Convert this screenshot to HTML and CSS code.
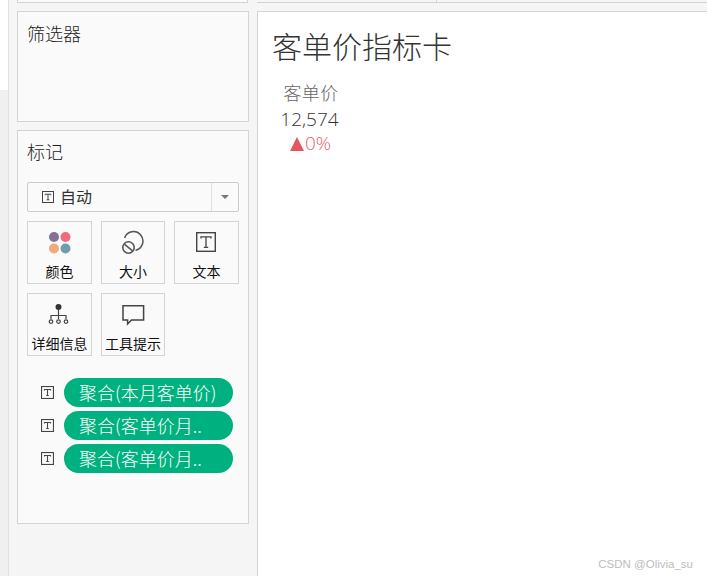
FILE: index.html
```html
<!DOCTYPE html>
<html lang="zh">
<head>
<meta charset="utf-8">
<title>客单价指标卡</title>
<link rel="stylesheet" href="styles.css">
</head>
<body>
<div class="app">
  <div class="edge"><div class="edge-top"></div></div>
  <aside class="sidebar">
    <div class="stub"></div>
    <section class="card filters"><h2 class="card-title">筛选器</h2></section>
    <section class="card marks">
      <h2 class="card-title marks-title">标记</h2>
      <div class="select">
        <div class="select-value">
          <svg class="t-icon" viewBox="0 0 12 12"><rect x=".5" y=".5" width="11" height="11" fill="none" stroke="#444"/><path d="M3.2 4.2V3.2H8.8V4.2M6 3.2V8.8M4.8 8.8H7.2" fill="none" stroke="#444"/></svg>
          <span class="select-text">自动</span>
        </div>
        <div class="select-arrow"><i class="caret"></i></div>
      </div>
      <div class="buttons">
        <div class="mark-btn">
          <svg class="btn-icon" viewBox="0 0 26 26"><circle cx="7" cy="7" r="5" fill="#85709a"/><circle cx="18.5" cy="7" r="5" fill="#f0697f"/><circle cx="7" cy="18.5" r="5" fill="#f0a97f"/><circle cx="18.5" cy="18.5" r="5" fill="#6f9dab"/></svg>
          <span>颜色</span>
        </div>
        <div class="mark-btn">
          <svg class="btn-icon" viewBox="0 0 26 26"><path d="M4.6 8A9.4 9.4 0 1 1 15.5 20.2" fill="none" stroke="#555" stroke-width="1.5"/><circle cx="8.5" cy="17.5" r="5.7" fill="none" stroke="#555" stroke-width="1.6"/><path d="M4.6 14.4L12.6 20.8" stroke="#555" stroke-width="1.6"/></svg>
          <span>大小</span>
        </div>
        <div class="mark-btn">
          <svg class="btn-icon" viewBox="0 0 26 26"><rect x="2.7" y="2.7" width="18.6" height="18.6" fill="none" stroke="#444" stroke-width="1.4"/><path d="M7 8.5V6.8H17V8.5M12 6.8V17.3M9.8 17.3H14.2" fill="none" stroke="#444" stroke-width="1.3"/></svg>
          <span>文本</span>
        </div>
        <div class="mark-btn">
          <svg class="btn-icon" viewBox="0 0 26 26"><circle cx="11.5" cy="5" r="3" fill="#333"/><path d="M11.5 8V17M4 17V13.5H19V17" fill="none" stroke="#444" stroke-width="1.2"/><circle cx="4" cy="19.6" r="1.8" fill="none" stroke="#444" stroke-width="1.2"/><circle cx="11.5" cy="19.6" r="1.8" fill="none" stroke="#444" stroke-width="1.2"/><circle cx="19" cy="19.6" r="1.8" fill="none" stroke="#444" stroke-width="1.2"/></svg>
          <span>详细信息</span>
        </div>
        <div class="mark-btn">
          <svg class="btn-icon" viewBox="0 0 26 26"><path d="M3 3.7H23.6V18H11.5L7.6 22V18H3Z" fill="none" stroke="#444" stroke-width="1.5"/></svg>
          <span>工具提示</span>
        </div>
      </div>
      <ul class="pills">
        <li class="pill-row">
          <svg class="t-icon" viewBox="0 0 12 12"><rect x=".5" y=".5" width="11" height="11" fill="none" stroke="#444"/><path d="M3.2 4.2V3.2H8.8V4.2M6 3.2V8.8M4.8 8.8H7.2" fill="none" stroke="#444"/></svg>
          <span class="pill">聚合(本月客单价)</span>
        </li>
        <li class="pill-row">
          <svg class="t-icon" viewBox="0 0 12 12"><rect x=".5" y=".5" width="11" height="11" fill="none" stroke="#444"/><path d="M3.2 4.2V3.2H8.8V4.2M6 3.2V8.8M4.8 8.8H7.2" fill="none" stroke="#444"/></svg>
          <span class="pill">聚合(客单价月..</span>
        </li>
        <li class="pill-row">
          <svg class="t-icon" viewBox="0 0 12 12"><rect x=".5" y=".5" width="11" height="11" fill="none" stroke="#444"/><path d="M3.2 4.2V3.2H8.8V4.2M6 3.2V8.8M4.8 8.8H7.2" fill="none" stroke="#444"/></svg>
          <span class="pill">聚合(客单价月..</span>
        </li>
      </ul>
    </section>
  </aside>
  <main class="main">
    <div class="tabs"><div class="tab"></div></div>
    <div class="sheet">
      <h1 class="sheet-title">客单价指标卡</h1>
      <div class="kpi">
        <div class="kpi-label">客单价</div>
        <div class="kpi-value">12,574</div>
        <div class="kpi-delta"><i class="tri"></i>0%</div>
      </div>
      <div class="watermark">CSDN @Olivia_su</div>
    </div>
  </main>
</div>
</body>
</html>
```
FILE: styles.css
```css
* { box-sizing: border-box; }
html, body { margin: 0; height: 100%; overflow: hidden; }
body { font-family: "Noto Sans CJK SC", "Liberation Sans", sans-serif; color: #333; background: #f5f5f5; }
h1, h2, ul { margin: 0; padding: 0; font-weight: 400; list-style: none; }

.app { display: flex; width: 707px; height: 576px; }

.edge { width: 9px; flex: none; background: #f0f0f0; border-right: 1px solid #e1e1e1; }
.edge-top { height: 90px; background: #fff; }

.sidebar { width: 248px; flex: none; padding: 0 9px 0 8px; background: #f5f5f5; display: flex; flex-direction: column; }
.stub { height: 3px; margin-bottom: 8px; background: #fafafa; border: 1px solid #d4d4d4; border-top: 0; }

.card { width: 232px; background: #fafafa; border: 1px solid #d4d4d4; }
.filters { height: 111px; margin-bottom: 8px; padding: 8px 9px 0; }
.marks { height: 394px; padding: 7px 9px 0; }
.card-title { font-size: 18px; line-height: 26px; color: #222; font-weight: 300; }
.marks-title { margin-bottom: 18px; }

.select { width: 212px; height: 30px; display: flex; background: #fafafa; border: 1px solid #ccc; border-radius: 2px; }
.select-value { flex: 1; display: flex; align-items: center; gap: 6px; padding-left: 14px; font-size: 16px; color: #333; border-right: 1px solid #e0e0e0; }
.select-text { line-height: 26px; height: 28px; }
.select-arrow { width: 26px; display: flex; align-items: center; justify-content: center; }
.caret { width: 0; height: 0; border-left: 4px solid transparent; border-right: 4px solid transparent; border-top: 4px solid #777; }
.t-icon { width: 12px; height: 12px; flex: none; }

.buttons { display: grid; grid-template-columns: 65px 64px 65px; column-gap: 9px; row-gap: 9px; margin-top: 9px; }
.mark-btn { height: 63px; padding-top: 8px; display: flex; flex-direction: column; align-items: center; background: #fafafa; border: 1px solid #d4d4d4; font-size: 14px; line-height: 20px; color: #111; white-space: nowrap; overflow: hidden; }
.btn-icon { width: 26px; height: 26px; flex: none; margin-bottom: 5px; }

.pills { margin-top: 22px; display: flex; flex-direction: column; gap: 4px; }
.pill-row { display: flex; align-items: center; gap: 10px; padding-left: 14px; }
.pill-row .t-icon { width: 13px; height: 13px; }
.pill { width: 169px; height: 29px; padding-left: 15px; border-radius: 15px; background: #00b180; color: #fff; font-size: 18px; line-height: 29px; font-weight: 300; white-space: nowrap; overflow: hidden; }

.main { flex: 1; display: flex; flex-direction: column; min-width: 0; }
.tabs { height: 3px; margin-bottom: 8px; border-bottom: 1px solid #d4d4d4; background: #f5f5f5; }
.tab { width: 180px; height: 2px; border-right: 1px solid #d4d4d4; }
.sheet { position: relative; flex: 1; padding: 12px 0 0 14px; background: #fff; border-left: 1px solid #d4d4d4; border-top: 1px solid #d4d4d4; }
.sheet-title { font-size: 30px; line-height: 42px; color: #333; font-weight: 300; }
.kpi { width: 76px; margin-top: 14px; display: flex; flex-direction: column; align-items: center; }
.kpi-label { font-size: 18px; line-height: 24px; color: #666; letter-spacing: .4px; margin-left: 2px; font-weight: 300; }
.kpi-value { margin: 2px 0 0 -1px; font-size: 19px; line-height: 26px; font-weight: 300; color: #333; font-family: "Open Sans", "Liberation Sans", sans-serif; }
.kpi-delta { display: flex; align-items: center; margin: -1px 0 0 1px; font-size: 19px; line-height: 25px; font-weight: 300; color: #e8606a; font-family: "Open Sans", "Liberation Sans", sans-serif; }
.tri { width: 0; height: 0; margin-right: 1px; border-left: 7px solid transparent; border-right: 7px solid transparent; border-bottom: 14px solid #e6555c; }
.watermark { position: absolute; right: 14px; bottom: 4px; font-size: 11.5px; line-height: 16px; color: #bdbdbd; font-family: "Liberation Sans", sans-serif; }
```
